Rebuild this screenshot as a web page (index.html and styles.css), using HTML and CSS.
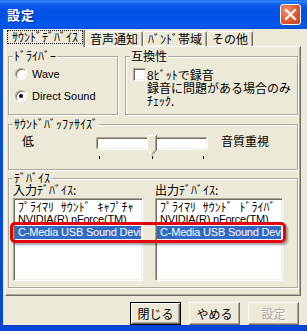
FILE: index.html
```html
<!DOCTYPE html>
<html lang="ja">
<head>
<meta charset="utf-8">
<title>設定</title>
<link rel="stylesheet" href="styles.css">
</head>
<body>
<div class="window">
  <div class="titlebar">
    <span class="title">設定</span>
    <span class="close"><svg width="19" height="19" viewBox="0 0 19 19"><path d="M5 5 L14 14 M14 5 L5 14" stroke="#fff" stroke-width="2.2" stroke-linecap="square"/></svg></span>
  </div>
  <div class="frame">
    <div class="client">
      <div class="tabs">
        <div class="tab active"><span class="focus">ｻｳﾝﾄﾞﾃﾞﾊﾞｲｽ</span></div>
        <div class="tab">音声通知</div>
        <div class="tab">ﾊﾞﾝﾄﾞ帯域</div>
        <div class="tab">その他</div>
      </div>
      <div class="panel">
        <div class="row-top">
          <fieldset class="group driver">
            <legend>ﾄﾞﾗｲﾊﾞｰ</legend>
            <div class="radios">
              <div class="radio"><span class="rb"></span><span class="lat">Wave</span></div>
              <div class="radio"><span class="rb on"></span><span class="lat">Direct Sound</span></div>
            </div>
          </fieldset>
          <fieldset class="group compat">
            <legend>互換性</legend>
            <div class="check">
              <span class="cb"></span>
              <div class="check-text">8ﾋﾞｯﾄで録音<br>録音に問題がある場合のみ<br>ﾁｪｯｸ.</div>
            </div>
          </fieldset>
        </div>
        <fieldset class="group buffer">
          <legend>ｻｳﾝﾄﾞﾊﾞｯﾌｧｻｲｽﾞ</legend>
          <div class="buf-row">
            <span class="low">低</span>
            <svg class="slider" width="112" height="25" viewBox="0 0 112 25">
              <rect x="0" y="2" width="112" height="13" fill="#fff"/>
              <path d="M0.5 14.5V2.5H111.5" stroke="#ACA899" fill="none"/>
              <path d="M1.5 13.5V3.5H110.5" stroke="#716F64" fill="none"/>
              <path d="M0.5 14.5H111.5V2.5" stroke="#fff" fill="none"/>
              <path d="M1.5 13.5H110.5V3.5" stroke="#F1EFE2" fill="none"/>
              <path d="M51 0H61V15L56 20L51 15Z" fill="#ECE9D8"/>
              <path d="M51.5 15V0.5H60" stroke="#fff" fill="none"/>
              <path d="M51.5 15.2L55.5 19.2" stroke="#fff" fill="none"/>
              <path d="M60.5 0V15.2L56 19.8" stroke="#716F64" fill="none"/>
              <path d="M59.5 1V14.8L56 18.3" stroke="#ACA899" fill="none"/>
              <rect x="3" y="21" width="1" height="3" fill="#000"/>
              <rect x="56" y="21" width="1" height="3" fill="#000"/>
              <rect x="107" y="21" width="1" height="3" fill="#000"/>
            </svg>
            <span class="high">音質重視</span>
          </div>
        </fieldset>
        <fieldset class="group devices">
          <legend>ﾃﾞﾊﾞｲｽ</legend>
          <div class="dev-grid">
            <div class="dev-col">
              <div class="dev-label">入力ﾃﾞﾊﾞｲｽ:</div>
              <div class="listbox">
                <div class="item">ﾌﾟﾗｲﾏﾘ ｻｳﾝﾄﾞ ｷｬﾌﾟﾁｬ ﾄﾞﾗｲﾊﾞ</div>
                <div class="item lat">NVIDIA(R) nForce(TM)</div>
                <div class="item lat sel">C-Media USB Sound Device</div>
              </div>
            </div>
            <div class="dev-col">
              <div class="dev-label">出力ﾃﾞﾊﾞｲｽ:</div>
              <div class="listbox">
                <div class="item">ﾌﾟﾗｲﾏﾘ ｻｳﾝﾄﾞ ﾄﾞﾗｲﾊﾞ</div>
                <div class="item lat">NVIDIA(R) nForce(TM)</div>
                <div class="item lat sel">C-Media USB Sound Device</div>
              </div>
            </div>
          </div>
        </fieldset>
      </div>
      <div class="buttons">
        <div class="btn default">閉じる</div>
        <div class="btn">やめる</div>
        <div class="btn disabled">設定</div>
      </div>
    </div>
  </div>
  <div class="annot"></div>
</div>
</body>
</html>
```
FILE: styles.css
```css
* { box-sizing: border-box; }
html, body { margin: 0; padding: 0; }
body {
  width: 307px;
  height: 331px;
  overflow: hidden;
  font-family: "Noto Sans CJK JP", "Noto Sans", sans-serif;
  font-size: 12px;
  line-height: 12px;
  color: #000;
  background: #0855DD;
}
.lat {
  font-family: "Liberation Sans", "Noto Sans CJK JP", sans-serif;
  font-size: 11px;
}
.window {
  position: relative;
  width: 307px;
  height: 331px;
  display: flex;
  flex-direction: column;
}
.titlebar {
  height: 29px;
  flex: none;
  display: flex;
  align-items: center;
  justify-content: space-between;
  padding: 0 6px 0 7px;
  background: linear-gradient(to bottom, #0A5FE6 0px, #3A8CFF 1px, #1A6CF5 3px, #0A58EC 6px, #0052E4 12px, #0053E6 20px, #0058EE 25px, #0051DE 29px);
  color: #fff;
}
.title {
  font-weight: bold;
  font-size: 13px;
  line-height: 14px;
  letter-spacing: 1px;
  text-shadow: 1px 1px #0A1E8A;
}
.close {
  width: 21px;
  height: 21px;
  border: 1px solid #fff;
  border-radius: 3px;
  background: radial-gradient(circle at 30% 30%, #F0926E 0%, #E25E35 45%, #C8401A 100%);
  display: flex;
}
.frame {
  flex: 1;
  display: flex;
  padding: 0 0 6px 3px;
  background: linear-gradient(to bottom, #0855DD, #0845D5);
}
.client {
  flex: 1;
  background: #ECE9D8;
  display: flex;
  flex-direction: column;
}
.tabs {
  height: 17px;
  flex: none;
  display: flex;
  align-items: flex-end;
  padding-left: 2px;
  position: relative;
  z-index: 1;
}
.tab {
  height: 15px;
  border: 1px solid #fff;
  border-bottom: 0;
  border-right-color: #716F64;
  border-radius: 2px 2px 0 0;
  box-shadow: inset -1px 0 #ACA899;
  padding: 0 4px;
  line-height: 13px;
  white-space: nowrap;
  background: #ECE9D8;
}
.tab.active {
  height: 18px;
  margin-bottom: -1px;
  padding: 0 1px;
}
.focus {
  display: block;
  border: 1px dotted #000;
  padding: 0 4px;
  line-height: 12px;
}
.panel {
  height: 250px;
  flex: none;
  margin: 0 6px 0 2px;
  border: 1px solid;
  border-color: #fff #716F64 #716F64 #fff;
  box-shadow: inset -1px -1px #ACA899;
  padding: 3px 2px 0;
  display: flex;
  flex-direction: column;
}
.group {
  margin: 0;
  padding: 0;
  min-width: 0;
  border: 1px solid #ACA899;
  box-shadow: inset 1px 1px #fff, 1px 1px #fff;
}
.group legend {
  margin-left: 4px;
  padding: 0 1px;
  line-height: 12px;
  background: #ECE9D8;
}
.row-top {
  display: flex;
  gap: 7px;
}
.driver { width: 110px; flex: none; }
.compat { flex: 1; }
.radios {
  display: flex;
  flex-direction: column;
  gap: 8px;
  padding: 5px 0 11px 6px;
}
.radio {
  display: flex;
  align-items: center;
  gap: 5px;
  height: 14px;
  line-height: 12px;
}
.rb {
  width: 12px;
  height: 12px;
  border-radius: 50%;
  background: #fff;
  border: 1px solid;
  border-color: #ACA899 #fff #fff #ACA899;
  box-shadow: inset 1px 1px #716F64, inset -1px -1px #F1EFE2;
  display: flex;
  align-items: center;
  justify-content: center;
}
.rb.on::after {
  content: "";
  width: 4px;
  height: 4px;
  border-radius: 50%;
  background: #000;
}
.check {
  display: flex;
  gap: 1px;
  padding: 6px 0 7px 7px;
}
.cb {
  width: 13px;
  height: 13px;
  flex: none;
  background: #fff;
  border: 1px solid;
  border-color: #ACA899 #fff #fff #ACA899;
  box-shadow: inset 1px 1px #716F64, inset -1px -1px #F1EFE2;
}
.check-text {
  line-height: 13px;
  white-space: nowrap;
}
.buffer { margin-top: 3px; }
.buf-row {
  display: flex;
  align-items: flex-start;
  padding: 5px 0 9px 13px;
}
.low { width: 74px; flex: none; }
.slider { display: block; flex: none; }
.high { margin-left: 13px; }
.devices { margin-top: 2px; }
.dev-grid {
  display: grid;
  grid-template-columns: 130px 128px;
  column-gap: 12px;
  padding: 0 0 6px 4px;
}
.dev-label {
  height: 12px;
  margin-bottom: 2px;
  white-space: nowrap;
}
.listbox {
  height: 83px;
  background: #fff;
  border: 1px solid;
  border-color: #ACA899 #fff #fff #ACA899;
  box-shadow: inset 1px 1px #716F64, inset -1px -1px #F1EFE2;
  padding: 1px;
  overflow: hidden;
}
.item {
  height: 13px;
  line-height: 13px;
  padding-left: 3px;
  white-space: nowrap;
  overflow: hidden;
  word-spacing: 4px;
}
.item.lat {
  letter-spacing: -0.2px;
  word-spacing: 0;
}
.item.sel {
  background: #316AC5;
  color: #fff;
}
.buttons {
  display: flex;
  justify-content: flex-end;
  gap: 8px;
  margin-top: 6px;
  padding-right: 8px;
}
.btn {
  width: 51px;
  height: 23px;
  display: flex;
  align-items: center;
  justify-content: center;
  border: 1px solid;
  border-color: #fff #716F64 #716F64 #fff;
  box-shadow: inset -1px -1px #ACA899;
  background: #ECE9D8;
  line-height: 12px;
}
.btn.default {
  border: 1px solid #000;
  box-shadow: inset 1px 1px #fff, inset -1px -1px #716F64, inset -2px -2px #ACA899;
}
.btn.disabled {
  color: #ACA899;
  text-shadow: 1px 1px #fff;
}
.annot {
  position: absolute;
  left: 10px;
  top: 222px;
  width: 276px;
  height: 21px;
  border: 3px solid #E3000F;
  border-radius: 5px;
  box-shadow: 2px 2px 2px rgba(0, 0, 0, 0.35);
}
```
